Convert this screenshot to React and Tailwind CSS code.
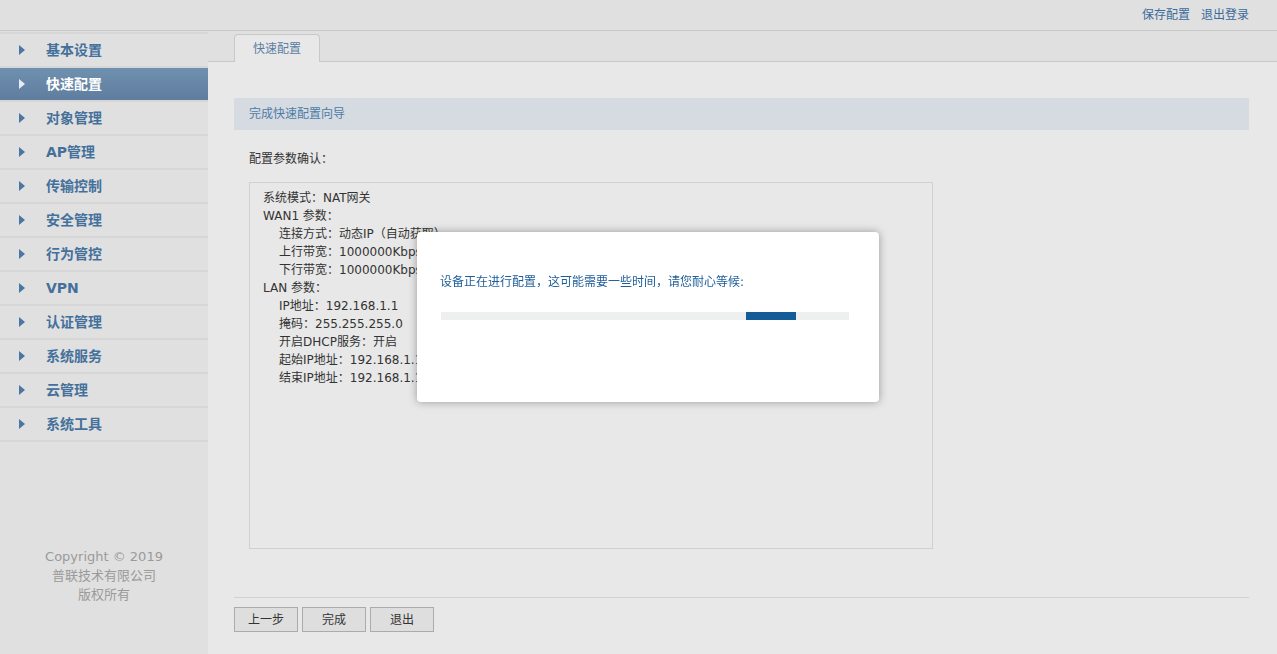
import React from "react";

const FONT = { fontFamily: '"DejaVu Sans", "Noto Sans CJK SC", sans-serif' };

const MENU = [
  "基本设置",
  "快速配置",
  "对象管理",
  "AP管理",
  "传输控制",
  "安全管理",
  "行为管控",
  "VPN",
  "认证管理",
  "系统服务",
  "云管理",
  "系统工具",
];

const LINES = [
  { text: "系统模式：NAT网关", indent: false },
  { text: "WAN1 参数：", indent: false },
  { text: "连接方式：动态IP（自动获取）", indent: true },
  { text: "上行带宽：1000000Kbps", indent: true },
  { text: "下行带宽：1000000Kbps", indent: true },
  { text: "LAN 参数：", indent: false },
  { text: "IP地址：192.168.1.1", indent: true },
  { text: "掩码：255.255.255.0", indent: true },
  { text: "开启DHCP服务：开启", indent: true },
  { text: "起始IP地址：192.168.1.100", indent: true },
  { text: "结束IP地址：192.168.1.199", indent: true },
];

const Arrow = ({ active }) => (
  <svg width="6" height="10" viewBox="0 0 6 10" className="shrink-0">
    <path d="M0 0 L6 5 L0 10 Z" fill={active ? "#e6edf5" : "#4a76a2"} />
  </svg>
);

const App = () => {
  return (
    <div className="h-screen flex flex-col bg-[#e8e8e8] overflow-hidden" style={FONT}>
      {/* top bar */}
      <div className="h-[31px] shrink-0 bg-[#e0e0e0] border-b border-[#c8c8c8] flex items-center justify-end pr-[28px] gap-[11px] text-[12px] text-[#3a6b9c]">
        <span>保存配置</span>
        <span>退出登录</span>
      </div>

      <div className="flex flex-1 min-h-0">
        {/* sidebar */}
        <div className="w-[208px] shrink-0 bg-[#e0e0e0] flex flex-col pt-px">
          <div className="border-t-2 border-[#d6d6d6]">
            {MENU.map((m, i) => {
              const active = i === 1;
              return (
                <div
                  key={m}
                  className={`h-[34px] flex items-center border-b-2 border-[#d6d6d6] ${
                    active
                      ? "bg-gradient-to-b from-[#7090b0] to-[#5f7e9f] text-white"
                      : "text-[#44709c]"
                  }`}
                >
                  <div className="w-[46px] pl-[19px] flex">
                    <Arrow active={active} />
                  </div>
                  <span className="text-[14px] font-bold">{m}</span>
                </div>
              );
            })}
          </div>
          <div className="mt-[105px] text-center text-[13px] text-[#9a9a9a] leading-[19px]">
            <div>Copyright © 2019</div>
            <div>普联技术有限公司</div>
            <div>版权所有</div>
          </div>
        </div>

        {/* main */}
        <div className="flex-1 flex flex-col min-w-0">
          <div className="h-[31px] shrink-0 bg-[#e0e0e0] border-b border-[#c8c8c8] flex items-end pl-[26px]">
            <div className="w-[86px] h-[28px] -mb-px bg-[#e8e8e8] border border-b-0 border-[#c8c8c8] rounded-t-[4px] flex items-center justify-center text-[12px] text-[#5b7fa3]">
              快速配置
            </div>
          </div>

          <div className="pl-[26px] pr-[28px] pt-[36px] flex flex-col">
            <div className="h-[32px] bg-[#d5dbe0] flex items-center pl-[15px] text-[12px] text-[#4d7ca8]">
              完成快速配置向导
            </div>
            <div className="pl-[15px] pt-[21px] text-[12px] text-[#333] leading-[16px]">
              配置参数确认：
            </div>
            <div className="ml-[15px] mt-[15px] w-[684px] h-[367px] border border-[#d0d0d0] pt-[6px] pl-[13px] text-[12px] text-[#333] leading-[18px]">
              {LINES.map((l) => (
                <div key={l.text} className={l.indent ? "pl-[16px]" : ""}>
                  {l.text}
                </div>
              ))}
            </div>
            <div className="mt-[48px] border-t border-[#d2d2d2] pt-[9px] flex gap-[4px]">
              {["上一步", "完成", "退出"].map((b) => (
                <button
                  key={b}
                  className="w-[64px] h-[25px] bg-[#dedede] border border-[#ababab] text-[12px] text-[#333]"
                >
                  {b}
                </button>
              ))}
            </div>
          </div>
        </div>
      </div>

      {/* progress dialog */}
      <div className="fixed left-[417px] top-[232px] w-[462px] h-[170px] bg-white rounded-[4px] shadow-[0_0_8px_rgba(0,0,0,0.35)] pl-[24px] pt-[42px]">
        <div className="text-[12px] text-[#1d5e99] leading-[16px] -ml-px">
          设备正在进行配置，这可能需要一些时间，请您耐心等候:
        </div>
        <div className="mt-[22px] w-[408px] h-[8px] bg-[#eeefef] flex">
          <div className="ml-[305px] w-[50px] h-full bg-[#135c98]" />
        </div>
      </div>
    </div>
  );
};

export default App;
